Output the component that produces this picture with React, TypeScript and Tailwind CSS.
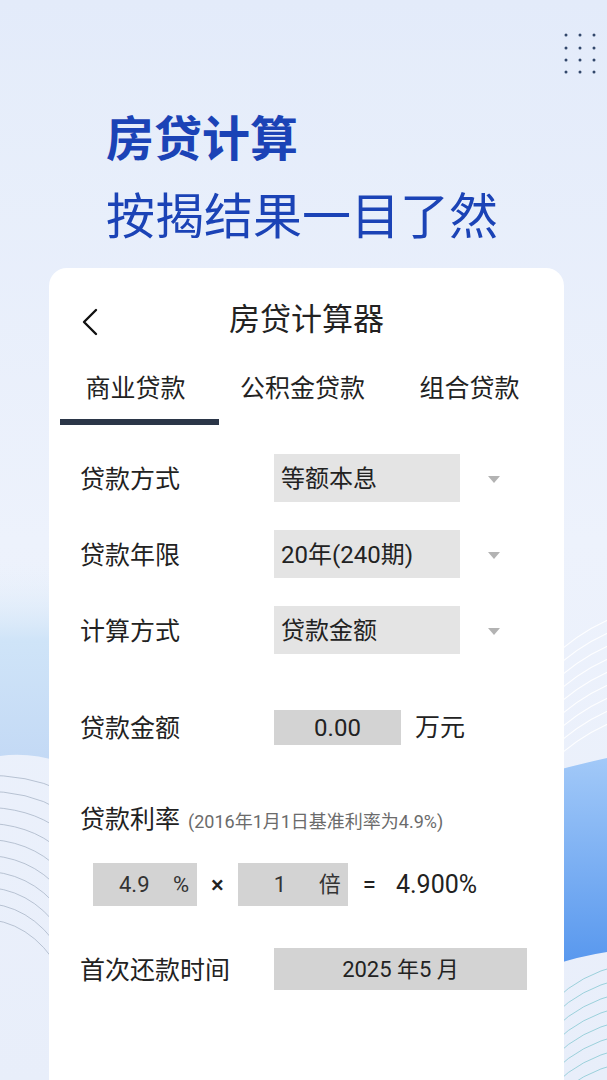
const font = { fontFamily: 'Roboto, "Noto Sans CJK SC", sans-serif' };

function Backdrop() {
  const leftArcs = [0, 1, 2, 3, 4, 5, 6, 7, 8, 9];
  const rightArcs = [0, 1, 2, 3, 4, 5, 6, 7, 8];
  return (
    <svg className="absolute inset-0" width="607" height="1080" viewBox="0 0 607 1080">
      <defs>
        <linearGradient id="bg" x1="0" y1="0" x2="0" y2="1">
          <stop offset="0" stopColor="#e3ebfa" />
          <stop offset="0.5" stopColor="#edf2fc" />
          <stop offset="1" stopColor="#e8eefa" />
        </linearGradient>
        <linearGradient id="leftBand" x1="0" y1="0" x2="0" y2="1">
          <stop offset="0" stopColor="#eaf2fb" stopOpacity="0" />
          <stop offset="0.4" stopColor="#cfe4f8" />
          <stop offset="1" stopColor="#c3d9f5" />
        </linearGradient>
        <linearGradient id="rightBlue" x1="0" y1="0" x2="0" y2="1">
          <stop offset="0" stopColor="#a2c9f8" />
          <stop offset="1" stopColor="#5797ee" />
        </linearGradient>
      </defs>
      <rect width="607" height="1080" fill="url(#bg)" />
      <rect x="0" y="60" width="250" height="180" fill="#ffffff" opacity="0.07" />
      <rect x="330" y="50" width="200" height="190" fill="#ffffff" opacity="0.06" />
      {/* left strip */}
      <path d="M0 560 L60 560 L60 762 Q30 752 0 756 Z" fill="url(#leftBand)" />
      {leftArcs.map((i) => (
        <path
          key={i}
          d={`M-20 ${775 + i * 16} Q 30 ${775 + i * 16} 60 ${790 + i * 20}`}
          stroke="#aab6c8"
          strokeWidth="1"
          fill="none"
          opacity="0.8"
        />
      ))}
      {/* right strip */}
      {rightArcs.map((i) => (
        <path
          key={i}
          d={`M550 ${660 + i * 13} Q 580 ${630 + i * 13} 620 ${615 + i * 13}`}
          stroke="#ffffff"
          strokeWidth="1.2"
          fill="none"
          opacity="0.9"
        />
      ))}
      <path d="M550 772 Q 580 764 607 758 L607 952 Q 580 956 550 966 Z" fill="url(#rightBlue)" />
      {rightArcs.map((i) => (
        <path
          key={i}
          d={`M555 ${1000 + i * 14} Q 580 ${975 + i * 14} 620 ${965 + i * 14}`}
          stroke="#88c9d3"
          strokeWidth="1"
          fill="none"
          opacity="0.8"
        />
      ))}
      {/* dots */}
      {[35, 48, 60, 72].map((y) =>
        [566, 580, 594].map((x) => <circle key={`${x}-${y}`} cx={x} cy={y} r="1.5" fill="#32476b" />)
      )}
    </svg>
  );
}

function BackIcon() {
  return (
    <svg width="18" height="28" viewBox="0 0 18 28">
      <path d="M15 2 L3 14 L15 26" stroke="#111" strokeWidth="2.4" fill="none" strokeLinecap="round" strokeLinejoin="round" />
    </svg>
  );
}

function Caret() {
  return (
    <svg width="12" height="7" viewBox="0 0 12 7">
      <path d="M0 0 L12 0 L6 7 Z" fill="#b3b3b3" />
    </svg>
  );
}

function SelectRow({ label, value }: { label: string; value: string }) {
  return (
    <div className="flex items-center h-[48px]">
      <div className="w-[225px] pl-[31px] pt-[3px] text-[25px] text-[#222]">{label}</div>
      <div className="w-[186px] h-full bg-[#e4e4e4] flex items-center pl-[7px] pt-[2px] text-[24px] text-[#222]">
        {value}
      </div>
      <div className="ml-[28px] pt-[3px]">
        <Caret />
      </div>
    </div>
  );
}

export default function App() {
  return (
    <div className="relative w-[607px] h-[1080px] overflow-hidden" style={font}>
      <Backdrop />

      <div className="relative flex flex-col h-full">

        {/* Headline */}
        <div className="pl-[106px] pt-[107px] text-[#1b43b6]" style={{ fontFamily: '"Noto Sans CJK SC", sans-serif' }}>
          <div className="text-[48px] font-bold leading-[56px]">房贷计算</div>
          <div className="mt-[22px] text-[49px] leading-[56px]">按揭结果一目了然</div>
        </div>

        {/* Card */}
        <div className="mt-[27px] ml-[49px] w-[515px] flex-1 bg-white rounded-t-[18px]">

          {/* Top bar */}
          <div className="mt-[24px] h-[56px] grid grid-cols-[1fr_auto_1fr] items-center">
            <div className="pl-[32px] pt-[4px] flex">
              <BackIcon />
            </div>
            <div className="text-[31px] text-[#222]">房贷计算器</div>
            <div />
          </div>

          {/* Tabs */}
          <div className="mt-[25px] ml-[3px] grid grid-cols-[167px_167px_167px] text-[25px] text-[#222]">
            <div className="flex flex-col">
              <div className="text-center leading-[32px]">商业贷款</div>
              <div className="mt-[14px] ml-[8px] h-[6px] bg-[#2b3648]" />
            </div>
            <div className="text-center leading-[32px]">公积金贷款</div>
            <div className="text-center leading-[32px]">组合贷款</div>
          </div>

          {/* Selects */}
          <div className="mt-[29px] flex flex-col gap-[28px]">
            <SelectRow label="贷款方式" value="等额本息" />
            <SelectRow label="贷款年限" value="20年(240期)" />
            <SelectRow label="计算方式" value="贷款金额" />
          </div>

          {/* Amount */}
          <div className="mt-[56px] flex items-center h-[35px] text-[#222]">
            <div className="w-[225px] pl-[31px] pt-[3px] text-[25px]">贷款金额</div>
            <div className="w-[127px] h-full bg-[#d3d3d3] flex items-center justify-center text-[24px]">0.00</div>
            <div className="ml-[14px] text-[25px]">万元</div>
          </div>

          {/* Rate */}
          <div className="mt-[59px] pl-[31px] flex items-baseline text-[#222]">
            <span className="text-[25px] leading-[32px]">贷款利率</span>
            <span className="ml-[8px] text-[18px] text-[#6b6b6b]">(2016年1月1日基准利率为4.9%)</span>
          </div>

          <div className="mt-[27px] pl-[44px] flex items-center h-[43px] text-[#222]">
            <div className="w-[104px] h-full bg-[#d3d3d3] flex items-center justify-between pl-[26px] pr-[8px] text-[22px] text-[#333]">
              <span>4.9</span>
              <span>%</span>
            </div>
            <div className="ml-[14px] text-[24px] font-medium">×</div>
            <div className="ml-[14px] w-[110px] h-full bg-[#d3d3d3] flex items-center justify-between pl-[36px] pr-[7px] text-[22px] text-[#333]">
              <span>1</span>
              <span>倍</span>
            </div>
            <div className="ml-[15px] text-[24px]">=</div>
            <div className="ml-[20px] text-[25px]">4.900%</div>
          </div>

          {/* First repayment */}
          <div className="mt-[42px] flex items-center h-[42px] text-[#222]">
            <div className="w-[225px] pl-[31px] pt-[3px] text-[25px]">首次还款时间</div>
            <div className="w-[253px] h-full bg-[#d3d3d3] flex items-center justify-center text-[22px]">2025 年5 月</div>
          </div>

        </div>
      </div>
    </div>
  );
}
